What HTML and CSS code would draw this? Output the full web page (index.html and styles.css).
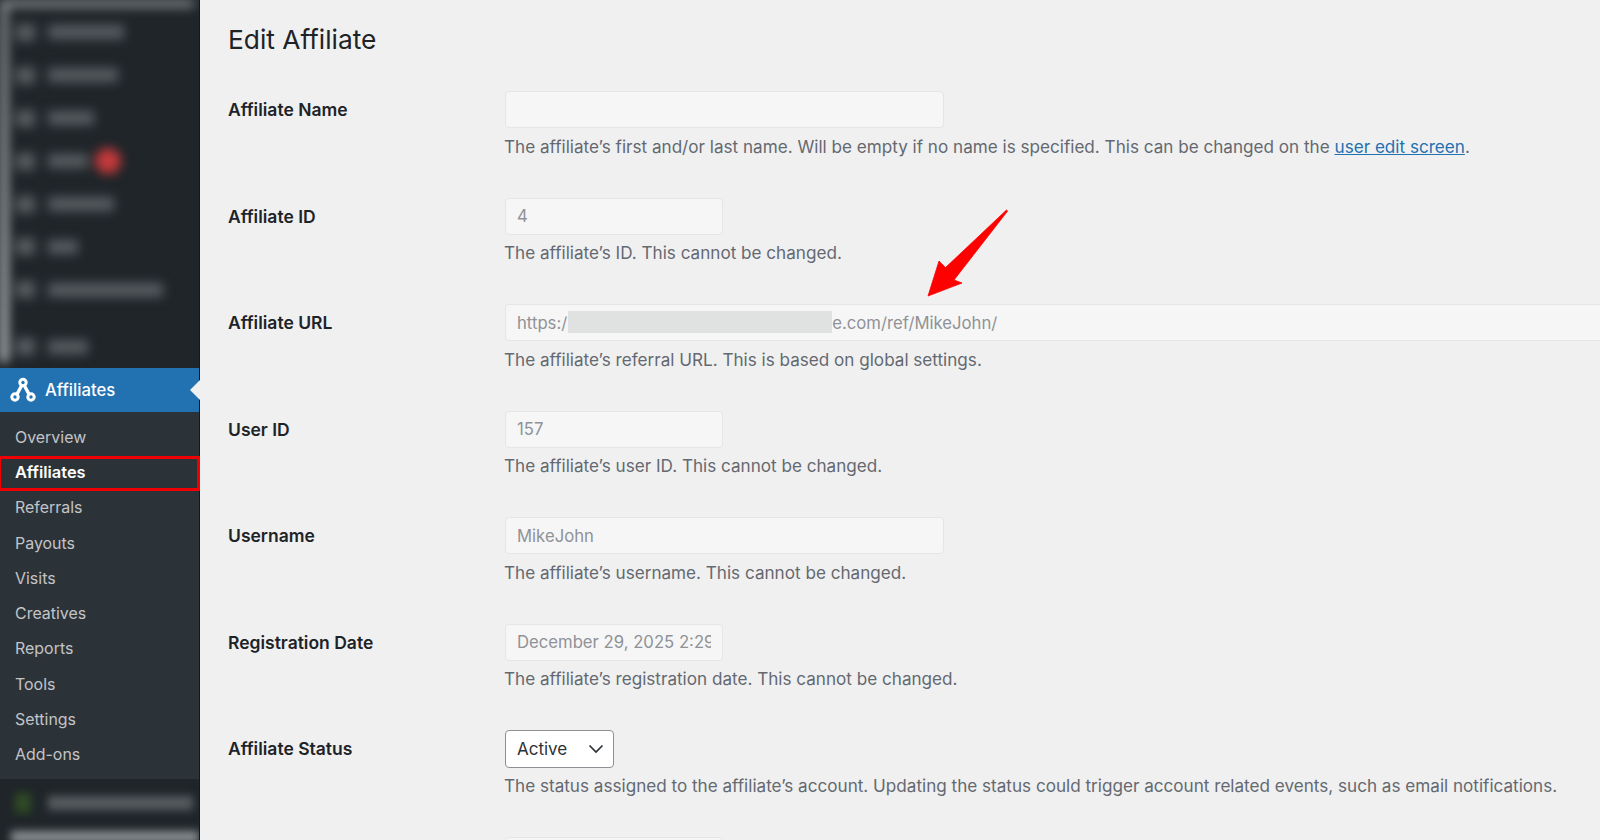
FILE: index.html
```html
<!DOCTYPE html>
<html lang="en">
<head>
<meta charset="utf-8">
<title>Edit Affiliate</title>
<link rel="stylesheet" href="styles.css">
</head>
<body>
<div class="page">
  <aside class="sidebar">
    <div class="blur-top">
      <div class="blur-inner">
        <div class="edge-left"></div>
        <div class="edge-top"></div>
        <div class="b-row"><i class="b-ico"></i><i class="b-txt w76"></i></div>
        <div class="b-row"><i class="b-ico"></i><i class="b-txt w70"></i></div>
        <div class="b-row"><i class="b-ico"></i><i class="b-txt w46"></i></div>
        <div class="b-row"><i class="b-ico"></i><i class="b-txt w40"></i><i class="b-dot"></i></div>
        <div class="b-row"><i class="b-ico"></i><i class="b-txt w66"></i></div>
        <div class="b-row"><i class="b-ico"></i><i class="b-txt w30"></i></div>
        <div class="b-row"><i class="b-ico"></i><i class="b-txt w115"></i></div>
        <div class="b-row b-last"><i class="b-ico"></i><i class="b-txt w40"></i></div>
      </div>
    </div>
    <div class="menu-head">
      <svg class="menu-icon" viewBox="0 0 26 26" width="26" height="26" aria-hidden="true">
        <path d="M13 6 L5.5 20 M13 6 L20.5 20" fill="none" stroke="#fff" stroke-width="3.4"/>
        <circle cx="13" cy="5.5" r="3.2" fill="#2271b1" stroke="#fff" stroke-width="3"/>
        <circle cx="5" cy="20" r="3.2" fill="#2271b1" stroke="#fff" stroke-width="3"/>
        <circle cx="21" cy="20" r="3.2" fill="#2271b1" stroke="#fff" stroke-width="3"/>
      </svg>
      <span>Affiliates</span>
      <i class="notch"></i>
    </div>
    <nav class="submenu">
      <a>Overview</a>
      <a class="current">Affiliates</a>
      <a>Referrals</a>
      <a>Payouts</a>
      <a>Visits</a>
      <a>Creatives</a>
      <a>Reports</a>
      <a>Tools</a>
      <a>Settings</a>
      <a>Add-ons</a>
    </nav>
    <div class="blur-bottom">
      <div class="bb-inner">
        <div class="bb-row"><i class="bb-ico"></i><i class="b-txt w145"></i></div>
        <div class="bb-strip"></div>
      </div>
    </div>
  </aside>

  <main class="main">
    <h1 class="title">Edit Affiliate</h1>
    <div class="form">
      <div class="row">
        <label class="lbl">Affiliate Name</label>
        <div class="field">
          <input class="inp regular" type="text" value="" readonly>
          <p class="desc">The affiliate’s first and/or last name. Will be empty if no name is specified. This can be changed on the <a class="link">user edit screen</a>.</p>
        </div>
      </div>
      <div class="row">
        <label class="lbl">Affiliate ID</label>
        <div class="field">
          <input class="inp small" type="text" value="4" readonly>
          <p class="desc">The affiliate’s ID. This cannot be changed.</p>
        </div>
      </div>
      <div class="row">
        <label class="lbl">Affiliate URL</label>
        <div class="field">
          <div class="inp wide">https:/<span class="redact"></span>e.com/ref/MikeJohn/</div>
          <p class="desc">The affiliate’s referral URL. This is based on global settings.</p>
        </div>
      </div>
      <div class="row">
        <label class="lbl">User ID</label>
        <div class="field">
          <input class="inp small" type="text" value="157" readonly>
          <p class="desc">The affiliate’s user ID. This cannot be changed.</p>
        </div>
      </div>
      <div class="row">
        <label class="lbl">Username</label>
        <div class="field">
          <input class="inp regular" type="text" value="MikeJohn" readonly>
          <p class="desc">The affiliate’s username. This cannot be changed.</p>
        </div>
      </div>
      <div class="row">
        <label class="lbl">Registration Date</label>
        <div class="field">
          <input class="inp small" type="text" value="December 29, 2025 2:29 pm" readonly>
          <p class="desc">The affiliate’s registration date. This cannot be changed.</p>
        </div>
      </div>
      <div class="row">
        <label class="lbl">Affiliate Status</label>
        <div class="field">
          <div class="select">
            <span>Active</span>
            <svg viewBox="0 0 16 10" width="16" height="10" aria-hidden="true"><path d="M1.5 1.5 L8 8 L14.5 1.5" fill="none" stroke="#2c3338" stroke-width="1.7"/></svg>
          </div>
          <p class="desc">The status assigned to the affiliate’s account. Updating the status could trigger account related events, such as email notifications.</p>
        </div>
      </div>
      <div class="row row-cut">
        <span class="lbl"></span>
        <div class="field"><div class="inp small"></div></div>
      </div>
    </div>
  </main>
</div>
<div class="red-box"></div>
<svg class="arrow" viewBox="0 0 84 90" width="84" height="90" aria-hidden="true">
  <path d="M2 88 L13 53 L19.5 59.6 L80.5 2 L81.6 3 L28 72 L36 75 Z" fill="#ff0000" stroke="#ff0000" stroke-width="0.8" stroke-linejoin="round"/>
</svg>
</body>
</html>
```
FILE: styles.css
```css
* { box-sizing: border-box; }
html, body { margin: 0; height: 840px; overflow: hidden; }
body {
  background: #f0f0f1;
  font-family: Inter, "Noto Sans", "Liberation Sans", sans-serif;
  position: relative;
}
.page { display: flex; height: 840px; }

/* Sidebar */
.sidebar {
  width: 200px;
  flex: none;
  display: flex;
  flex-direction: column;
  background: #1f2529;
  border-right: 1px solid #14181b;
}
.blur-top { height: 368px; overflow: hidden; flex: none; }
.blur-inner {
  position: relative;
  height: 368px;
  padding-top: 11px;
  filter: blur(5.5px);
}
.edge-left {
  position: absolute;
  left: 0; top: 0;
  width: 8px; height: 362px;
  background: linear-gradient(#7d8285, #c2c5c7);
}
.edge-top {
  position: absolute;
  left: 0; top: 0;
  width: 194px; height: 7px;
  background: #8b8f92;
}
.b-row { display: flex; align-items: center; height: 42.9px; padding-left: 16px; }
.b-last { margin-top: 14px; }
.b-ico { width: 19px; height: 17px; background: #565c60; margin-right: 13px; flex: none; }
.b-txt { height: 14px; background: #565c60; display: block; flex: none; }
.w30 { width: 30px; } .w40 { width: 40px; } .w46 { width: 46px; }
.w66 { width: 66px; } .w70 { width: 70px; } .w76 { width: 76px; }
.w115 { width: 115px; } .w145 { width: 145px; }
.b-dot { width: 26px; height: 26px; border-radius: 50%; background: #c4393b; margin-left: 7px; flex: none; }

.menu-head {
  position: relative;
  height: 44px;
  flex: none;
  display: flex;
  align-items: center;
  gap: 9px;
  padding-left: 10px;
  background: #2271b1;
  color: #fff;
  font-size: 16.7px;
  font-weight: 500;
}
.menu-icon { flex: none; }
.notch {
  position: absolute;
  right: -1px; top: 12px;
  border: 10px solid transparent;
  border-left: 0;
  border-right-color: #f0f0f1;
}
.submenu {
  height: 367px;
  flex: none;
  background: #2c3338;
  padding-top: 7.5px;
  display: flex;
  flex-direction: column;
}
.submenu a {
  height: 35.3px;
  flex: none;
  display: flex;
  align-items: center;
  padding-left: 15px;
  color: #c3c4c7;
  font-size: 15.95px;
}
.submenu a.current { color: #fff; font-weight: 600; font-size: 16.4px; }
.blur-bottom { flex: 1; overflow: hidden; }
.bb-inner { filter: blur(4.5px); padding-top: 13px; height: 61px; }
.bb-row { display: flex; align-items: center; height: 22px; padding-left: 15px; }
.bb-ico { width: 16px; height: 20px; background: #2f4a25; margin-right: 17px; flex: none; }
.bb-strip { margin: 17px 0 0 11px; height: 12px; background: #8a8e91; }

/* Main */
.main { flex: 1; min-width: 0; padding-left: 28px; }
.title {
  margin: 0;
  height: 91px;
  padding-top: 22px;
  font-size: 26.3px;
  line-height: 36px;
  font-weight: 400;
  color: #1d2327;
}
.row { display: flex; height: 106.5px; }
.row-cut { height: 3.5px; overflow: hidden; }
.lbl {
  width: 276px;
  flex: none;
  font-size: 17.5px;
  font-weight: 600;
  line-height: 37.5px;
  color: #1d2327;
}
.field { flex: 1; min-width: 0; }
.inp {
  display: block;
  height: 37px;
  padding: 0 11px;
  margin: 0 0 0 1px;
  border: 1px solid #e4e5e7;
  border-radius: 4px;
  background: #f6f6f7;
  color: #8f9296;
  font: 400 16.7px/36px Inter, "Noto Sans", sans-serif;
  outline: none;
}
.regular { width: 439px; }
.small { width: 218px; }
.wide {
  width: 100%;
  white-space: nowrap;
  border-right: 0;
  border-radius: 4px 0 0 4px;
}
.redact {
  display: inline-block;
  vertical-align: top;
  width: 264px;
  height: 22px;
  margin: 6px 0 0 1px;
  background: #e0e1e1;
}
.desc {
  margin: 7.7px 0 0;
  font-size: 17.12px;
  line-height: 22px;
  color: #646970;
  white-space: nowrap;
}
.link { color: #2271b1; text-decoration: underline; }
.select {
  width: 109px;
  height: 38px;
  margin: 0 0 -0.7px 1px;
  display: flex;
  align-items: center;
  justify-content: space-between;
  padding: 0 9px 0 11px;
  background: #fff;
  border: 1px solid #8c8f94;
  border-radius: 4px;
  color: #2c3338;
  font-size: 17px;
}

/* Annotations */
.red-box {
  position: absolute;
  left: 0; top: 456px;
  width: 200px; height: 35px;
  border: 3px solid #f00000;
  border-left-width: 1px;
}
.arrow { position: absolute; left: 926px; top: 208px; }
```
